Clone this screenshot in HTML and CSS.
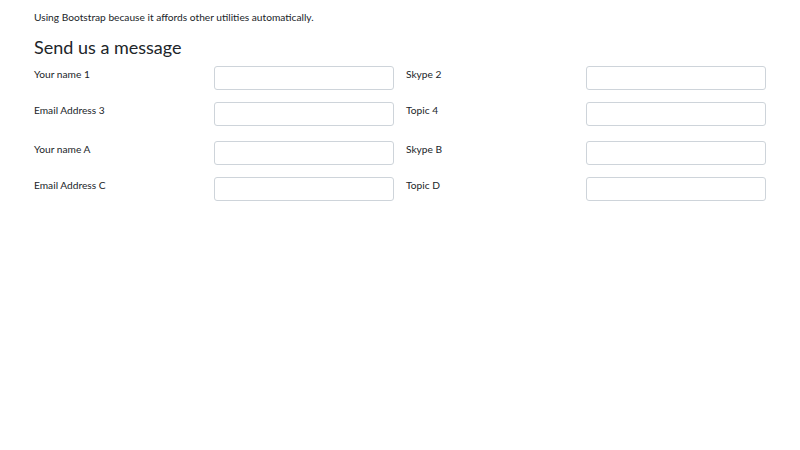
FILE: index.html
```html
<!DOCTYPE html>
<html lang="en">
<head>
    <meta charset="UTF-8">
    <meta name="viewport" content="width=device-width, initial-scale=1.0">
    <title>Send us a message</title>
    <link rel="stylesheet" href="styles.css">
</head>
<body>
    <div class="container">
        <p class="intro">Using Bootstrap because it affords other utilities automatically.</p>
        <h4 class="title">Send us a message</h4>

        <form class="contact-form">
            <div class="form-group">
                <div class="form-row">
                    <div class="field">
                        <label class="field-label">Your name 1</label>
                        <input class="field-input" type="text">
                    </div>
                    <div class="field">
                        <label class="field-label">Skype 2</label>
                        <input class="field-input" type="text">
                    </div>
                </div>
                <div class="form-row">
                    <div class="field">
                        <label class="field-label">Email Address 3</label>
                        <input class="field-input" type="text">
                    </div>
                    <div class="field">
                        <label class="field-label">Topic 4</label>
                        <input class="field-input" type="text">
                    </div>
                </div>
            </div>

            <div class="form-group">
                <div class="form-row">
                    <div class="field">
                        <label class="field-label">Your name A</label>
                        <input class="field-input" type="text">
                    </div>
                    <div class="field">
                        <label class="field-label">Skype B</label>
                        <input class="field-input" type="text">
                    </div>
                </div>
                <div class="form-row">
                    <div class="field">
                        <label class="field-label">Email Address C</label>
                        <input class="field-input" type="text">
                    </div>
                    <div class="field">
                        <label class="field-label">Topic D</label>
                        <input class="field-input" type="text">
                    </div>
                </div>
            </div>
        </form>
    </div>
</body>
</html>
```

FILE: styles.css
```css
body {
    font-family: Lato, "Noto Sans", sans-serif;
    margin: 0;
    padding: 0;
    background-color: #ffffff;
    color: #212529;
    font-size: 10.2px;
}
.container {
    width: 732px;
    margin: 0 auto;
    padding-top: 9px;
}
.intro {
    margin: 0 0 10px 0;
    line-height: 16px;
}
.title {
    font-size: 18px;
    font-weight: 400;
    line-height: 24px;
    margin: 0 0 7px 0;
}
.contact-form {
    display: flex;
    flex-direction: column;
    gap: 15px;
}
.form-group {
    display: flex;
    flex-direction: column;
    gap: 12px;
}
.form-row {
    display: flex;
    gap: 12px;
}
.field {
    flex: 1;
    display: flex;
    align-items: flex-start;
}
.field-label {
    width: 50%;
    line-height: 16px;
}
.field-input {
    width: 50%;
    height: 24px;
    box-sizing: border-box;
    border: 1px solid #ced4da;
    border-radius: 3px;
    padding: 0 6px;
    margin: 0;
    font: inherit;
}
```
